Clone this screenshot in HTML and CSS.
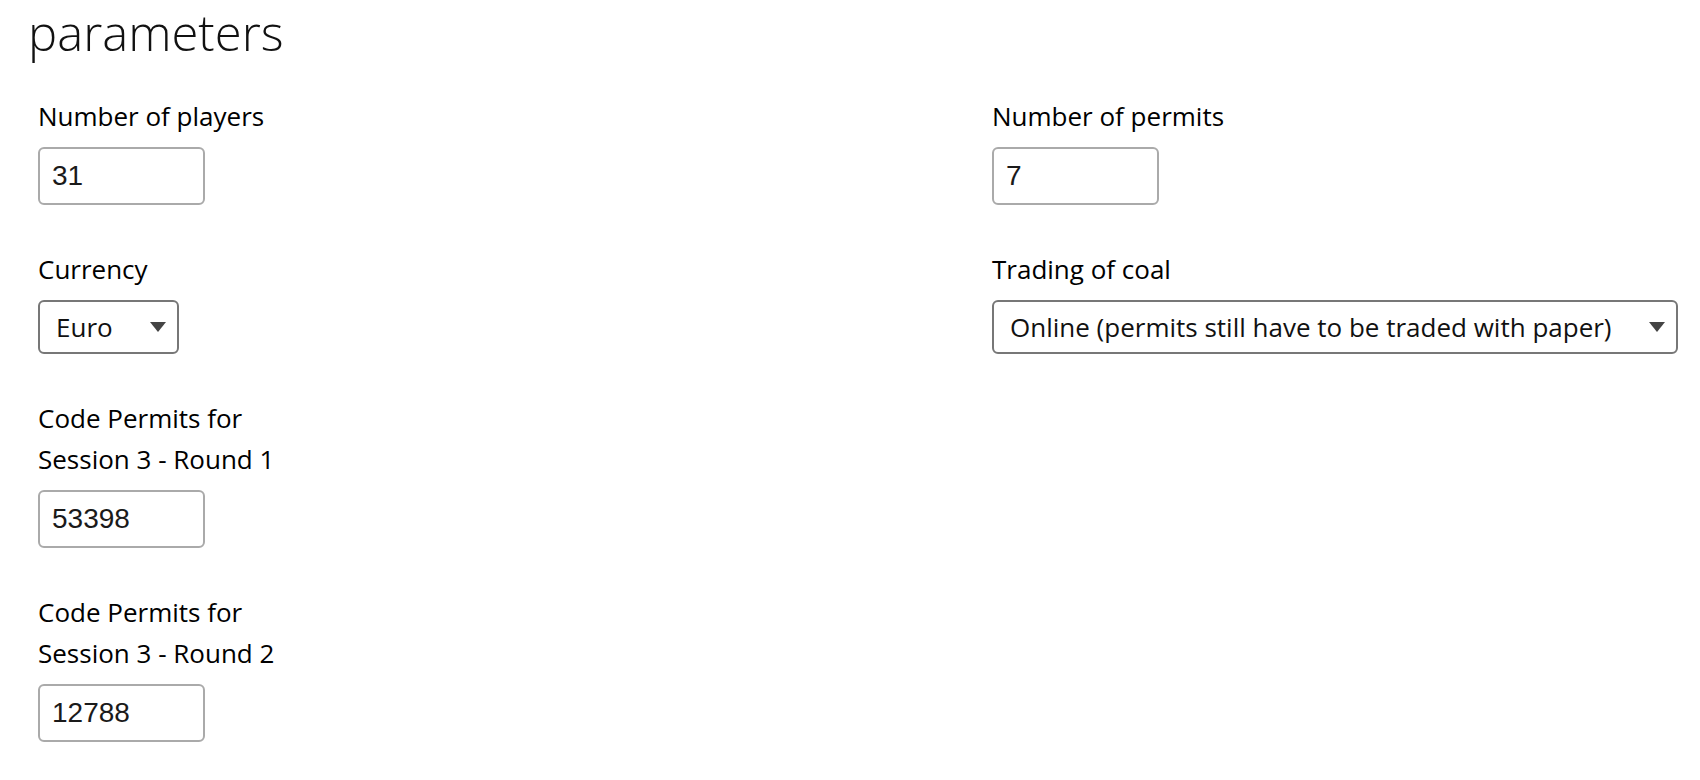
FILE: index.html
```html
<!DOCTYPE html>
<html lang="en">
<head>
<meta charset="utf-8">
<title>parameters</title>
<link rel="stylesheet" href="styles.css">
</head>
<body>
<div class="page">
  <h1 class="title">parameters</h1>
  <form class="grid">
    <div class="field">
      <label class="label" for="players">Number of players</label>
      <input class="num" id="players" type="text" value="31">
    </div>
    <div class="field">
      <label class="label" for="permits">Number of permits</label>
      <input class="num" id="permits" type="text" value="7">
    </div>
    <div class="field">
      <label class="label" for="currency">Currency</label>
      <span class="select-wrap">
        <select class="select" id="currency">
          <option>Euro</option>
        </select>
        <svg class="arrow" width="16" height="10" viewBox="0 0 16 10"><path d="M0 0 H16 L8 10 Z" fill="#444"/></svg>
      </span>
    </div>
    <div class="field">
      <label class="label" for="trading">Trading of coal</label>
      <span class="select-wrap">
        <select class="select" id="trading">
          <option>Online (permits still have to be traded with paper)</option>
        </select>
        <svg class="arrow" width="16" height="10" viewBox="0 0 16 10"><path d="M0 0 H16 L8 10 Z" fill="#444"/></svg>
      </span>
    </div>
    <div class="field">
      <label class="label" for="code1">Code Permits for Session 3 - Round 1</label>
      <input class="num" id="code1" type="text" value="53398">
    </div>
    <div class="field"></div>
    <div class="field">
      <label class="label" for="code2">Code Permits for Session 3 - Round 2</label>
      <input class="num" id="code2" type="text" value="12788">
    </div>
  </form>
</div>
</body>
</html>
```

FILE: styles.css
```css
html, body {
  margin: 0;
  padding: 0;
  background: #fff;
}

.page {
  padding-left: 28px;
  font-family: "Open Sans", "Liberation Sans", sans-serif;
  color: #000;
}

.title {
  margin: 0;
  font-family: "Open Sans", sans-serif;
  font-weight: 300;
  font-size: 49px;
  line-height: 64px;
  color: #111;
}

.grid {
  display: grid;
  grid-template-columns: 954px 1fr;
  row-gap: 44px;
  padding-left: 10px;
  margin: 32px 0 0 0;
}

.field {
  display: flex;
  flex-direction: column;
  align-items: flex-start;
}

.label {
  font-size: 26px;
  line-height: 41px;
  max-width: 270px;
  margin-bottom: 10px;
  color: #000;
}

.num {
  box-sizing: border-box;
  width: 167px;
  height: 58px;
  border: 2px solid #aaa;
  border-radius: 6px;
  padding: 0 12px;
  font-family: "Liberation Sans", Arial, sans-serif;
  font-size: 28px;
  color: #1a1a1a;
  background: #fff;
  outline: none;
}

.select-wrap {
  position: relative;
  display: inline-block;
}

.select {
  -webkit-appearance: none;
  appearance: none;
  box-sizing: border-box;
  height: 54px;
  border: 2px solid #777;
  border-radius: 6px;
  padding: 0 64px 0 16px;
  font-family: "Open Sans", sans-serif;
  font-size: 26px;
  color: #111;
  background: #fff;
  outline: none;
}

.arrow {
  position: absolute;
  right: 13px;
  top: 22px;
  pointer-events: none;
}
```
